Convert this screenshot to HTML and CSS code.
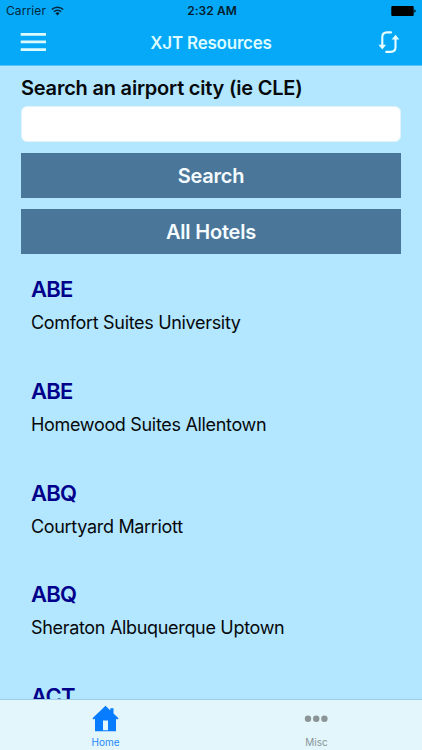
FILE: index.html
```html
<!DOCTYPE html>
<html lang="en">
<head>
<meta charset="utf-8">
<title>XJT Resources</title>
<link rel="stylesheet" href="styles.css">
</head>
<body>
<div class="app">
  <header class="header">
    <div class="status">
      <div class="carrier">
        <span>Carrier</span>
        <svg width="13" height="10" viewBox="0 0 13 10" fill="none" stroke="#03273b" stroke-width="1.6">
          <path d="M.8 3.500a8.200 8.200 0 0 1 11.400 0M2.900 5.700a5.100 5.100 0 0 1 7.200 0"/>
          <path d="M4.400 7.300a3 3 0 0 1 4.200 0L6.500 9.500z" fill="#03273b" stroke="none"/>
        </svg>
      </div>
      <span class="time">2:32 AM</span>
      <svg class="battery" width="25" height="11" viewBox="0 0 25 11">
        <rect x=".3" y=".1" width="22.400" height="10" rx="1"/>
        <path d="M23.300 3.500q1.400.3 1.400 1.600t-1.400 1.600z"/>
      </svg>
    </div>
    <div class="nav">
      <button class="icon-button" aria-label="Menu">
        <svg width="26" height="20" viewBox="0 0 26 20" fill="#dcfbff">
          <path d="M.7 0h25.300v2.700H.7zM.7 7.600h25.300v2.700H.7zM.7 15.200h25.300v2.700H.7z"/>
        </svg>
      </button>
      <h1 class="title">XJT Resources</h1>
      <button class="icon-button" aria-label="Refresh">
        <svg width="22" height="24" viewBox="0 0 22 24" fill="none" stroke="#e9fdff" stroke-width="2.1" stroke-linecap="round">
          <path d="M13 1.400H9Q4.300 1.400 4.300 6.200V14.500"/>
          <path d="M8.200 20.900h4.500Q17.500 20.900 17.500 16.100V7.500"/>
          <path d="M.5 13.700h7.600L4.300 18.400zM13.700 8.400h7.600L17.500 3.700z" fill="#e9fdff" stroke="none"/>
        </svg>
      </button>
    </div>
  </header>
  <main class="content">
    <label class="label" for="city">Search an airport city (ie CLE)</label>
    <input class="field" id="city" type="text">
    <button class="button">Search</button>
    <button class="button">All Hotels</button>
    <ul class="hotels">
      <li><h2>ABE</h2><p>Comfort Suites University</p></li>
      <li><h2>ABE</h2><p>Homewood Suites Allentown</p></li>
      <li><h2>ABQ</h2><p>Courtyard Marriott</p></li>
      <li><h2>ABQ</h2><p>Sheraton Albuquerque Uptown</p></li>
      <li><h2>ACT</h2></li>
    </ul>
  </main>
  <nav class="tabs">
    <a class="tab active">
      <svg width="28" height="28" viewBox="0 0 28 28" fill="#087cff">
        <path fill-rule="evenodd" d="M13.500.800L18.300 5.400V3.300h3.200v5.200L26.500 13.300l-1 1.100-1.500-.6V26.300H3V13.800l-1.500.6-1-1.100zM11 15.500v9.800h5v-9.800z"/>
      </svg>
      <span>Home</span>
    </a>
    <a class="tab">
      <svg width="28" height="28" viewBox="0 0 28 28" fill="#8b9497">
        <circle cx="5" cy="13.700" r="3.200"/><circle cx="13.200" cy="13.700" r="3.200"/><circle cx="21.400" cy="13.700" r="3.200"/>
      </svg>
      <span>Misc</span>
    </a>
  </nav>
</div>
</body>
</html>
```
FILE: styles.css
```css
* { box-sizing: border-box; }
body { margin: 0; font-family: Inter, "Liberation Sans", sans-serif; color: #05090c; }
h1, h2, p, ul { margin: 0; padding: 0; }
button { border: 0; padding: 0; background: none; font: inherit; }
svg { display: block; flex: none; }

.app { width: 422px; height: 750px; display: flex; flex-direction: column; background: #b3e6ff; overflow: hidden; }

.header { flex: none; height: 66px; background: #05a9f8; border-bottom: 1px solid #58c3fa; }
.status { display: grid; grid-template-columns: 1fr auto 1fr; align-items: center; height: 22px; padding: 0 6px; }
.carrier { display: flex; align-items: center; gap: 5px; font-size: 12px; line-height: 22px; color: #03273b; letter-spacing: .1px; }
.time { font-size: 12px; font-weight: 600; letter-spacing: .05px; line-height: 22px; color: #03202f; padding-left: 2px; }
.battery { justify-self: end; }
.nav { display: flex; justify-content: space-between; align-items: center; height: 42px; padding: 0 22px 0 20px; }
.title { font-size: 17px; font-weight: 600; color: #dcfbff; line-height: 24px; letter-spacing: -.23px; margin-right: 2px; }

.content { flex: 1; min-height: 0; overflow: hidden; display: flex; flex-direction: column; padding: 9px 21px 0; }
.label { font-size: 20px; font-weight: 600; line-height: 26px; white-space: nowrap; letter-spacing: -.21px; }
.field { flex: none; height: 36px; margin: 5px 0 11px; padding: 0 8px; border: 1px solid #e2f3fa; border-radius: 6px; background: #fff; font: inherit; }
.button { flex: none; height: 45px; margin-bottom: 11px; background: #4a7799; color: #f5fbff; font-size: 20px; font-weight: 600; letter-spacing: -.2px; }

.hotels { list-style: none; padding: 9px 10px 0; }
.hotels li { height: 101.800px; }
.hotels h2 { font-size: 22px; font-weight: 600; line-height: 30px; color: #00008b; letter-spacing: -.7px; }
.hotels p { font-size: 18px; line-height: 24px; margin-top: 7px; white-space: nowrap; letter-spacing: -.32px; }

.tabs { flex: none; height: 51px; display: flex; background: #e2f6fb; border-top: 1px solid #9fcde4; }
.tab { flex: 1; display: flex; flex-direction: column; align-items: center; padding-top: 5px; font-size: 10px; line-height: 12px; color: #8b9497; letter-spacing: 0; }
.tab span { margin-top: 3px; }
.active { color: #2589f5; }
```
